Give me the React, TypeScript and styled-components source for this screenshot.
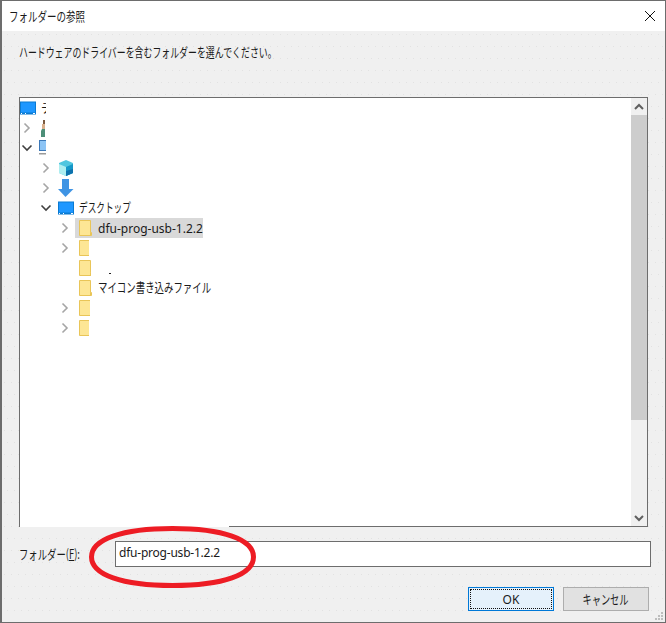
import React from 'react';
import styled, { createGlobalStyle } from 'styled-components';

// dialog data: indent is where the chevron slot starts inside the tree
type Chevron = 'none' | 'closed' | 'open';
type Folder = { chevron: Chevron; clip: number; label?: string; selected?: boolean; speck?: boolean };

const FOLDERS: Folder[] = [
  { chevron: 'closed', clip: 13, label: 'dfu-prog-usb-1.2.2', selected: true },
  { chevron: 'closed', clip: 10 },
  { chevron: 'none', clip: 12, speck: true },
  { chevron: 'none', clip: 13 },
  { chevron: 'closed', clip: 11 },
  { chevron: 'closed', clip: 10 },
];

const GlobalStyle = createGlobalStyle`
  html, body { margin: 0; padding: 0; background: #f0f0f0; }
  * { box-sizing: border-box; }
`;

const ChevronIcon = ({ kind }: { kind: Chevron }) => {
  if (kind === 'none') return <ChevronSlot />;
  return (
    <ChevronSlot>
      <svg width="16" height="16" viewBox="0 0 16 16" fill="none" strokeWidth="1.6">
        {kind === 'closed' ? (
          <path d="M4.5 3.5 L9 8 L4.5 12.5" stroke="#a6a6a6" />
        ) : (
          <path d="M2.5 5.5 L7 10 L11.5 5.5" stroke="#404040" />
        )}
      </svg>
    </ChevronSlot>
  );
};

const FolderIcon = ({ clip }: { clip: number }) => (
  <svg width={clip} height="16" viewBox={`0 0 ${clip} 16`}>
    <path d="M0.5 0.5 H11.5 V12.5 H12.5 V15.5 H0.5 Z" fill="#fde695" stroke="#e9c558" />
    <path d="M11.5 12.5 V15.5" stroke="#e9c558" />
  </svg>
);

const DesktopIcon = () => (
  <svg width="16" height="14" viewBox="0 0 16 14">
    <rect x="0" y="0.5" width="16" height="13" fill="#0a7ad1" />
    <rect x="1" y="1.5" width="14" height="10" fill="#1e97ff" />
    <path d="M1 12.5 H2 M5 12.5 H6 M13 12.5 H15" stroke="#ffffff" />
  </svg>
);

const PersonIcon = () => (
  <svg width="6" height="17" viewBox="0 0 6 17">
    <rect x="4" y="0" width="2" height="4" fill="#7a5a40" />
    <rect x="3" y="4" width="3" height="5" fill="#d9b08c" />
    <path d="M2 17 V11 L3 9 H6 V17 Z" fill="#4d8f78" />
  </svg>
);

const ComputerIcon = () => (
  <svg width="7" height="16" viewBox="0 0 7 16">
    <rect x="0.5" y="0.5" width="7" height="10" fill="#8cc4f5" stroke="#3b78b8" />
    <rect x="0" y="13" width="7" height="1.5" fill="#9a9a9a" />
  </svg>
);

const CubeIcon = () => (
  <svg width="16" height="16" viewBox="0 0 16 16">
    <path d="M8 0 L15 3 V13 L8 16 L1 13 V3 Z" fill="#4fc6df" />
    <path d="M1 4 L8 7 V16 L1 13 Z" fill="#aeeef0" />
    <path d="M8 7 L15 4 V13 L8 16 Z" fill="#1597c8" />
    <path d="M8 11 L15 9 V13 L8 16 Z" fill="#0e72ad" />
  </svg>
);

const ArrowIcon = () => (
  <svg width="16" height="18" viewBox="0 0 16 18">
    <path d="M4 0 H11 V10 H15.5 L7.5 18 L0 10 H4 Z" fill="#3f94e4" />
  </svg>
);

const App = () => (
  <Dialog>
    <GlobalStyle />
    <TitleBar>
      <Narrow $scale={0.73}>フォルダーの参照</Narrow>
      <svg width="12" height="12" viewBox="0 0 12 12" stroke="#111" strokeWidth="1" fill="none">
        <path d="M1 1 L11 11 M11 1 L1 11" />
      </svg>
    </TitleBar>
    <Body>
      <Prompt>
        <Narrow $scale={0.685}>ハードウェアのドライバーを含むフォルダーを選んでください。</Narrow>
      </Prompt>
      <Panel>
        <Tree>
          <TreeRow $indent={0}>
            <DesktopIcon />
            <ClippedLabel>デスクトップ</ClippedLabel>
          </TreeRow>
          <TreeRow $indent={0}>
            <ChevronIcon kind="closed" />
            <PersonIcon />
          </TreeRow>
          <TreeRow $indent={0}>
            <ChevronIcon kind="open" />
            <ComputerIcon />
          </TreeRow>
          <TreeRow $indent={19}>
            <ChevronIcon kind="closed" />
            <CubeIcon />
          </TreeRow>
          <TreeRow $indent={19}>
            <ChevronIcon kind="closed" />
            <ArrowIcon />
          </TreeRow>
          <TreeRow $indent={19}>
            <ChevronIcon kind="open" />
            <DesktopIcon />
            <RowLabel>
              <Narrow $scale={0.665}>デスクトップ</Narrow>
            </RowLabel>
          </TreeRow>
          {FOLDERS.map((f, i) => (
            <TreeRow key={i} $indent={38}>
              <ChevronIcon kind={f.chevron} />
              <FolderItem $selected={!!f.selected}>
                <FolderIcon clip={f.clip} />
                {f.label && <FolderLabel>{f.label}</FolderLabel>}
                {i === 3 && (
                  <RowLabelTight>
                    <Narrow $scale={0.725}>マイコン書き込みファイル</Narrow>
                  </RowLabelTight>
                )}
                {f.speck && <Speck />}
              </FolderItem>
            </TreeRow>
          ))}
        </Tree>
        <ScrollBar>
          <ScrollButton>
            <svg width="16" height="16" viewBox="0 0 16 16" fill="none" stroke="#606060" strokeWidth="2">
              <path d="M4 10 L8 6 L12 10" />
            </svg>
          </ScrollButton>
          <ScrollThumb />
          <ScrollButton>
            <svg width="16" height="16" viewBox="0 0 16 16" fill="none" stroke="#606060" strokeWidth="2">
              <path d="M4 6 L8 10 L12 6" />
            </svg>
          </ScrollButton>
        </ScrollBar>
        <BorderPatch />
      </Panel>
      <FolderRow>
        <FieldLabel>
          <Narrow $scale={0.72}>
            フォルダー(<u>F</u>):
          </Narrow>
        </FieldLabel>
        <FieldInput>dfu-prog-usb-1.2.2</FieldInput>
      </FolderRow>
      <ButtonRow>
        <OkButton>OK</OkButton>
        <CancelButton>
          <Narrow $scale={0.71} $center>
            キャンセル
          </Narrow>
        </CancelButton>
      </ButtonRow>
    </Body>
    <Ellipse width="172" height="66" viewBox="0 0 172 66" fill="none">
      <path
        d="M6.5 33 C6.5 15.3 37 4.5 87.5 4.5 C138 4.5 168.5 15.3 168.5 33 C168.5 50.7 138 61.5 87.5 61.5 C37 61.5 6.5 50.7 6.5 33 Z"
        stroke="#ed1c24"
        strokeWidth="5"
      />
    </Ellipse>
    <Grip>
      <svg width="9" height="9" viewBox="0 0 9 9" fill="#bdbdbd">
        <rect x="6" y="0" width="2" height="2" />
        <rect x="3" y="3" width="2" height="2" />
        <rect x="6" y="3" width="2" height="2" />
        <rect x="0" y="6" width="2" height="2" />
        <rect x="3" y="6" width="2" height="2" />
        <rect x="6" y="6" width="2" height="2" />
      </svg>
    </Grip>
  </Dialog>
);

export default App;

const FONT = `"Noto Sans CJK JP", "Noto Sans", sans-serif`;
const LATIN = `"Noto Sans", "Noto Sans CJK JP", sans-serif`;

const Dialog = styled.div`
  position: relative;
  width: 666px;
  height: 623px;
  display: flex;
  flex-direction: column;
  border: 1px solid #6d6d6d;
  border-left-width: 2px;
  background-color: #f0f0f0;
  font-family: ${FONT};
  font-size: 12px;
  color: #1a1a1a;
  overflow: hidden;
`;

// the reference uses a condensed UI font for kana, so squeeze the CJK glyphs
const Narrow = styled.span<{ $scale: number; $center?: boolean }>`
  display: inline-block;
  font-size: 13px;
  line-height: 18px;
  white-space: nowrap;
  transform: scaleX(${p => p.$scale});
  transform-origin: ${p => (p.$center ? 'center' : 'left')};
`;

const TitleBar = styled.div`
  height: 30px;
  flex: none;
  background: #fff;
  display: flex;
  align-items: center;
  justify-content: space-between;
  padding: 0 9px 0 7px;
`;

// faint staggered dot texture of the dialog face
const Body = styled.div`
  flex: 1;
  display: flex;
  flex-direction: column;
  padding: 11px 14px 11px 17px;
  background-color: #f0f0f0;
  background-image:
    radial-gradient(circle at 2.5px 15.5px, #e2e2e2 0.7px, transparent 0.8px),
    radial-gradient(circle at 5.5px 3.5px, #e2e2e2 0.7px, transparent 0.8px);
  background-size: 7px 24px;
`;

const Prompt = styled.div`
  height: 20px;
  line-height: 20px;
  white-space: nowrap;
`;

const Panel = styled.div`
  position: relative;
  margin-top: 35px;
  width: 629px;
  height: 430px;
  display: flex;
  background: #fff;
  border: 1px solid #6d6d6d;
`;

const Tree = styled.div`
  flex: 1;
  display: flex;
  flex-direction: column;
`;

const TreeRow = styled.div<{ $indent: number }>`
  height: 20px;
  flex: none;
  display: flex;
  align-items: center;
  padding-left: ${p => p.$indent}px;
`;

const ChevronSlot = styled.span`
  width: 19px;
  flex: none;
  display: flex;
  align-items: center;
  svg { display: block; }
`;

const RowLabel = styled.span`
  display: flex;
  margin: 0 0 2px 5px;
  white-space: nowrap;
`;

const ClippedLabel = styled(RowLabel)`
  width: 5px;
  overflow: hidden;
`;

const RowLabelTight = styled(RowLabel)`
  margin-left: 6px;
  width: 113px;
`;

const FolderItem = styled.span<{ $selected: boolean }>`
  height: 20px;
  display: flex;
  align-items: center;
  margin-left: -2px;
  padding-left: 4px;
  background: ${p => (p.$selected ? '#d9d9d9' : 'transparent')};
`;

const FolderLabel = styled.span`
  margin-left: 6px;
  white-space: nowrap;
  font-family: ${LATIN};
`;

const Speck = styled.span`
  width: 2px;
  height: 1px;
  margin: 10px 0 0 18px;
  background: #222;
`;

const ScrollBar = styled.div`
  width: 16px;
  flex: none;
  display: flex;
  flex-direction: column;
  background: #f0f0f0;
`;

const ScrollButton = styled.div`
  height: 17px;
  flex: none;
  display: flex;
  align-items: center;
  justify-content: center;
  &:last-child { margin-top: auto; }
`;

const ScrollThumb = styled.div`
  height: 305px;
  background: #cdcdcd;
`;

const BorderPatch = styled.div`
  position: absolute;
  left: 0;
  bottom: -1px;
  width: 209px;
  height: 1px;
  background: #fff;
`;

const FolderRow = styled.div`
  margin-top: 14px;
  display: flex;
  align-items: center;
`;

const FieldLabel = styled.label`
  width: 96px;
  flex: none;
  white-space: nowrap;
`;

const FieldInput = styled.div`
  width: 536px;
  height: 26px;
  line-height: 22px;
  padding-left: 3px;
  background: #fff;
  border: 1px solid #6d6d6d;
  font-family: ${LATIN};
  letter-spacing: -0.22px;
`;

const ButtonRow = styled.div`
  margin-top: 20px;
  padding-right: 2px;
  display: flex;
  justify-content: flex-end;
  gap: 9px;
`;

const OkButton = styled.button`
  width: 86px;
  height: 24px;
  padding: 0;
  background: #e5f1fb;
  border: 1px solid #0078d7;
  outline: 1px dotted #111;
  outline-offset: -3px;
  font-family: ${LATIN};
  font-size: 12px;
  color: #1a1a1a;
`;

const CancelButton = styled.button`
  width: 86px;
  height: 24px;
  padding: 0;
  background: #e1e1e1;
  border: 1px solid #adadad;
  font-family: ${FONT};
  font-size: 12px;
  color: #1a1a1a;
`;

const Ellipse = styled.svg`
  position: absolute;
  left: 83px;
  top: 523px;
  pointer-events: none;
`;

const Grip = styled.div`
  position: absolute;
  right: 1px;
  bottom: 1px;
  line-height: 0;
`;
